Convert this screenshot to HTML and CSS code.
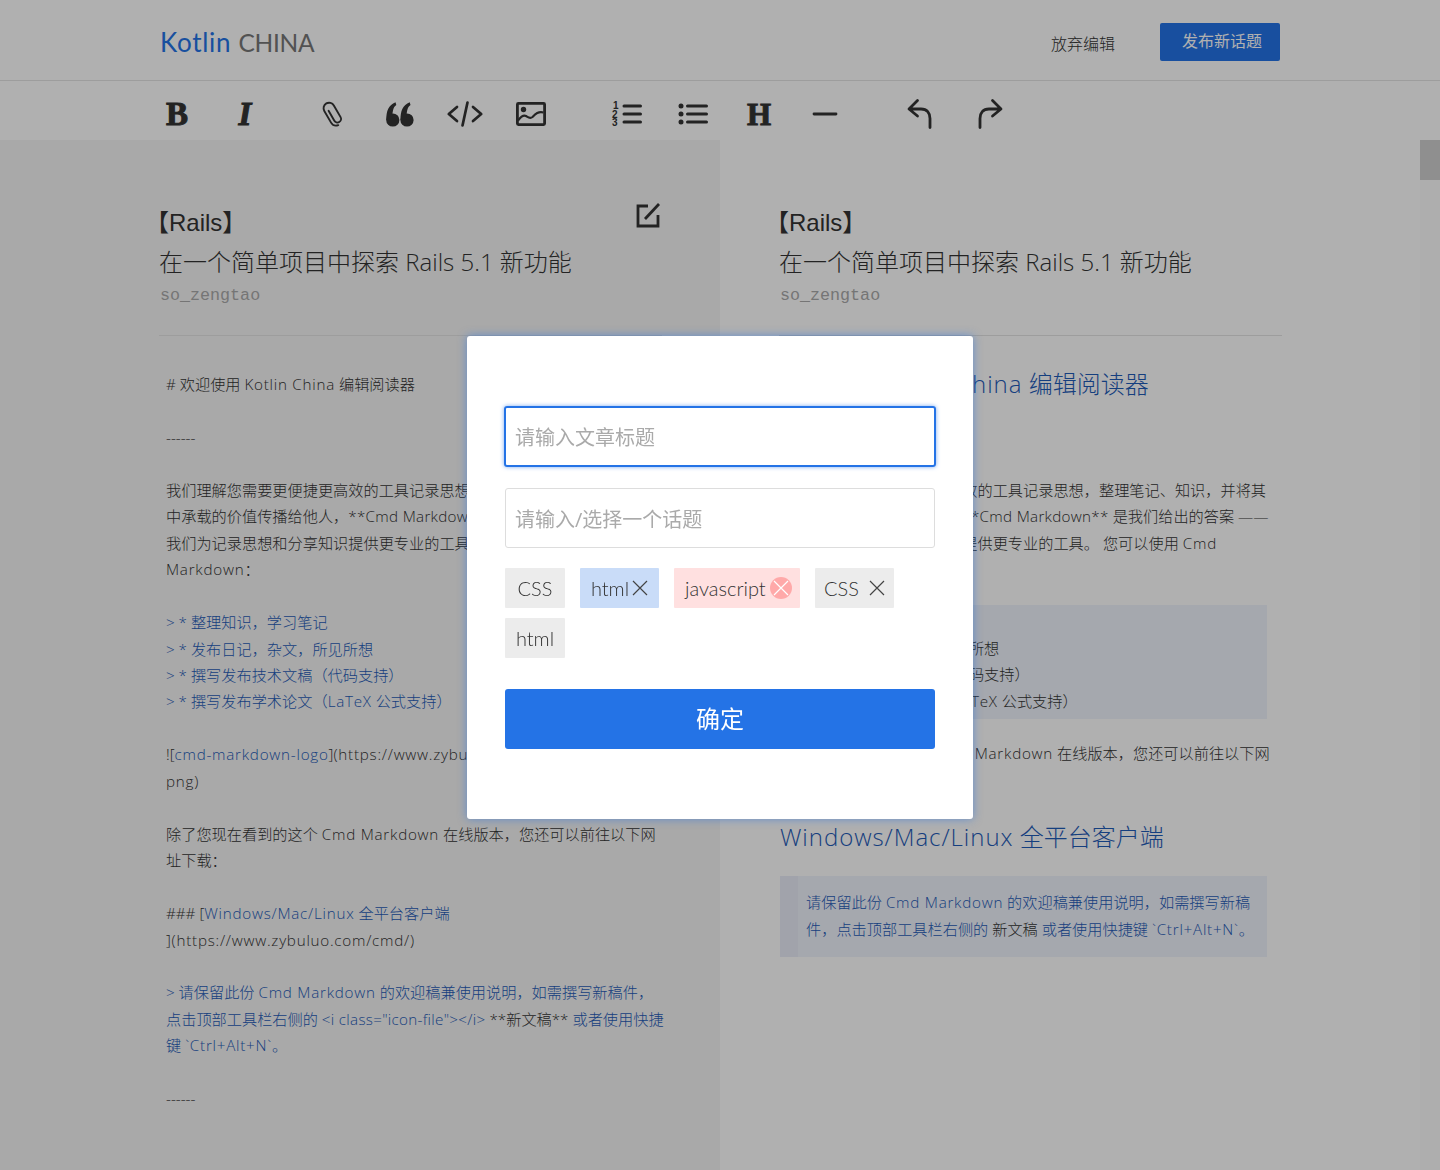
FILE: index.html
```html
<!DOCTYPE html>
<html lang="zh-CN">
<head>
    <meta charset="UTF-8">
    <title>Kotlin CHINA</title>
    <link rel="stylesheet" href="styles.css">
</head>
<body>
    <header class="topbar">
        <div class="logo"><span class="logo-blue">Kotlin</span> <span class="logo-grey">CHINA</span></div>
        <a class="discard">放弃编辑</a>
        <button class="publish">发布新话题</button>
    </header>

    <div class="toolbar">
        <div class="tool glyph">B</div>
        <div class="tool glyph italic tool-gap-a">I</div>
        <div class="tool tool-gap-b">
            <svg width="24" height="28" viewBox="0 0 24 28" fill="none" stroke="#333" stroke-width="1.900" stroke-linecap="round" stroke-linejoin="round"><g transform="rotate(-30 12 14)"><path d="M9.800 9v11.500a3.600 3.600 0 0 0 7.200 0V7a5.500 5.500 0 0 0-11 0v13.500a6 6 0 0 0 5 5.800"/></g></svg>
        </div>
        <div class="tool tool-quote">
            <svg width="28" height="25" viewBox="0 0 28 25" fill="#333"><circle cx="6.800" cy="18" r="6.600"/><circle cx="21" cy="18" r="6.600"/><path d="M.3 18C.3 9 2.500 3 9.500.3l.8 2.700C7 5 6.300 10 6.300 18zM14.500 18c0-9 2.200-15 9.200-17.700l.8 2.700c-3.300 2-4 7-4 15z"/></svg>
        </div>
        <div class="tool">
            <svg width="36" height="26" viewBox="0 0 36 26" fill="none" stroke="#333" stroke-width="2.700" stroke-linecap="round" stroke-linejoin="round"><path d="M10 6L1.800 13l8.200 7M26 6l8.200 7-8.200 7M20.500 1.500L15.500 24.500"/></svg>
        </div>
        <div class="tool">
            <svg width="30" height="24" viewBox="0 0 30 24" fill="none" stroke="#333" stroke-width="2.800"><rect x="1.400" y="1.400" width="27.200" height="21.200" rx="1"/><circle cx="7.500" cy="7.500" r="2.700" fill="#333" stroke="none"/><path d="M2 18.500c3-4 5.500-6 8-4.500s4 3 6.500 1c3-3 6-6 11-4.500" stroke-width="2.200"/></svg>
        </div>
        <div class="tool tool-gap-c">
            <svg width="30" height="26" viewBox="0 0 30 26"><text class="ol-num" x="1" y="8">1</text><text class="ol-num" x="0" y="17">2</text><text class="ol-num" x="0" y="25">3</text><path d="M12 5h16.500M12 13h16.500M12 21h16.500" stroke="#333" stroke-width="3" stroke-linecap="round"/></svg>
        </div>
        <div class="tool">
            <svg width="30" height="26" viewBox="0 0 30 26" fill="#333"><circle cx="3" cy="5" r="2.500"/><circle cx="3" cy="13" r="2.500"/><circle cx="3" cy="21" r="2.500"/><path d="M9.500 5h19M9.500 13h19M9.500 21h19" stroke="#333" stroke-width="3" stroke-linecap="round"/></svg>
        </div>
        <div class="tool glyph glyph-h">H</div>
        <div class="tool">
            <svg width="24" height="4" viewBox="0 0 24 4"><path d="M1 2h22" stroke="#333" stroke-width="2.800" stroke-linecap="round"/></svg>
        </div>
        <div class="tool tool-gap-d">
            <svg width="26" height="30" viewBox="0 0 26 30" fill="none" stroke="#333" stroke-width="2.800" stroke-linecap="round" stroke-linejoin="round"><path d="M10.500 1.500L2 10l8.500 7M2.500 10H14c6 0 9 4 9 9.500V28.500"/></svg>
        </div>
        <div class="tool tool-last">
            <svg width="26" height="30" viewBox="0 0 26 30" fill="none" stroke="#333" stroke-width="2.800" stroke-linecap="round" stroke-linejoin="round"><path d="M15.500 1.500L24 10l-8.500 7M23.500 10H12C6 10 3 14 3 19.500V28.500"/></svg>
        </div>
    </div>

    <main class="workspace">
        <section class="pane pane-edit">
            <div class="post-head">
                <svg class="edit-icon" width="24" height="26" viewBox="0 0 24 26" fill="none" stroke="#333" stroke-width="2.800"><path d="M12 4H2v20h20V13"/><path d="M9 17L23 2"/></svg>
                <div class="post-tag">【<span class="rails">Rails</span>】</div>
                <div class="post-title">在一个简单项目中探索 Rails 5.1 新功能</div>
                <div class="post-author">so_zengtao</div>
            </div>
            <div class="source"># 欢迎使用 <span class="en">Kotlin China</span> 编辑阅读器

------

我们理解您需要更便捷更高效的工具记录思想，整理笔记、知识，并将其
中承载的价值传播给他人，<span class="en-tight">**Cmd Markdown**</span> 是我们给出的答案 ——
我们为记录思想和分享知识提供更专业的工具。 您可以使用 <span class="en">Cmd</span>
<span class="en">Markdown</span>：

<span class="blue">&gt; * 整理知识，学习笔记
&gt; * 发布日记，杂文，所见所想
&gt; * 撰写发布技术文稿（代码支持）
&gt; * 撰写发布学术论文（<span class="en">LaTeX</span> 公式支持）</span>

![<span class="blue en">cmd-markdown-logo</span>]<span class="en">(https://www.zybuluo.com/static/img/logo.</span>
<span class="en">png)</span>

除了您现在看到的这个 <span class="en">Cmd Markdown</span> 在线版本，您还可以前往以下网
址下载：

### [<span class="blue"><span class="en">Windows/Mac/Linux</span> 全平台客户端</span>
<span class="en">](https://www.zybuluo.com/cmd/)</span>

<span class="blue">&gt; 请保留此份 <span class="en">Cmd Markdown</span> 的欢迎稿兼使用说明，如需撰写新稿件，
点击顶部工具栏右侧的 <span class="en-tight">&lt;i class="icon-file"&gt;&lt;/i&gt;</span></span> **新文稿** <span class="blue">或者使用快捷
键 <span class="en">`Ctrl+Alt+N`</span>。</span>

------</div>
        </section>

        <section class="pane pane-preview">
            <div class="post-head">
                <div class="post-tag">【<span class="rails">Rails</span>】</div>
                <div class="post-title">在一个简单项目中探索 Rails 5.1 新功能</div>
                <div class="post-author">so_zengtao</div>
            </div>
            <h1 class="preview-h">欢迎使用 <span class="en">Kotlin China</span> 编辑阅读器</h1>
            <p class="preview-p">我们理解您需要更便捷更高效的工具记录思想，整理笔记、知识，并将其<br>中承载的价值传播给他人，<span class="en-tight">**Cmd Markdown**</span> 是我们给出的答案 ——<br>我们为记录思想和分享知识提供更专业的工具。 您可以使用 <span class="en">Cmd</span><br><span class="en">Markdown</span>：</p>
            <blockquote class="quote quote-list">
                整理知识，学习笔记<br>发布日记，杂文，所见所想<br>撰写发布技术文稿（代码支持）<br>撰写发布学术论文（<span class="en">LaTeX</span> 公式支持）
            </blockquote>
            <p class="preview-p preview-after">除了您现在看到的这个 <span class="en">Cmd Markdown</span> 在线版本，您还可以前往以下网<br>址下载：</p>
            <h3 class="preview-h preview-h3"><span class="en">Windows/Mac/Linux</span> 全平台客户端</h3>
            <blockquote class="quote quote-note">
                请保留此份 <span class="en">Cmd Markdown</span> 的欢迎稿兼使用说明，如需撰写新稿<br>件，点击顶部工具栏右侧的 <span class="dark">新文稿</span> 或者使用快捷键 <span class="en">`Ctrl+Alt+N`</span>。
            </blockquote>
        </section>

        <div class="scrollbar"><div class="scroll-thumb"></div></div>
    </main>

    <div class="mask"></div>

    <div class="modal">
        <div class="field field-active">请输入文章标题</div>
        <div class="field">请输入/选择一个话题</div>
        <div class="tags">
            <span class="tag tag-fixed">CSS</span>
            <span class="tag tag-blue">html
                <svg class="tag-x" width="16" height="16" viewBox="0 0 16 16"><path d="M1 1l14 14M15 1L1 15" stroke="#444" stroke-width="1.200"/></svg>
            </span>
            <span class="tag tag-red">javascript
                <span class="tag-close"><svg width="16" height="16" viewBox="0 0 16 16"><path d="M1 1l14 14M15 1L1 15" stroke="#fff" stroke-width="1.200"/></svg></span>
            </span>
            <span class="tag tag-wide">CSS
                <svg class="tag-x" width="16" height="16" viewBox="0 0 16 16"><path d="M1 1l14 14M15 1L1 15" stroke="#444" stroke-width="1.200"/></svg>
            </span>
            <span class="tag tag-fixed">html</span>
        </div>
        <button class="confirm">确定</button>
    </div>
</body>
</html>
```

FILE: styles.css
```css
body {
    margin: 0;
    height: 1170px;
    overflow: hidden;
    background: #fff;
    color: #333;
    font-family: "Open Sans", "Noto Sans CJK SC", sans-serif;
    font-weight: 300;
}

/* top bar */
.topbar {
    height: 80px;
    border-bottom: 1px solid #e4e4e4;
    padding: 0 160px;
    display: flex;
    align-items: center;
}

.logo {
    flex: 1;
    font-family: Lato, sans-serif;
    font-weight: 400;
    font-size: 26px;
    margin-top: 4px;
    letter-spacing: 0.7px;
}

.logo-blue {
    color: #2473e6;
}

.logo-grey {
    color: #777;
    font-size: 24.5px;
    letter-spacing: -0.3px;
}

.discard {
    font-size: 16px;
    margin-right: 45px;
    margin-top: 6px;
    color: #333;
}

.publish {
    width: 120px;
    height: 38px;
    margin-top: 4px;
    padding: 0 6px 4px 10px;
    border: none;
    border-radius: 2px;
    background: #2473e6;
    color: #fff;
    font-size: 16px;
    font-family: inherit;
}

/* editor tools */
.toolbar {
    height: 59px;
    padding-left: 144px;
    display: flex;
    align-items: center;
}

.tool {
    width: 66px;
    height: 59px;
    display: flex;
    align-items: center;
    justify-content: center;
    flex-shrink: 0;
    margin-top: 5px;
}

.tool svg {
    margin-top: 2px;
    overflow: visible;
}

.tool-quote svg {
    margin-left: 2px;
}

.glyph {
    font-family: "Liberation Serif", serif;
    font-weight: bold;
    font-size: 33px;
    color: #333;
    -webkit-text-stroke: 1px #333;
    padding-top: 3px;
    box-sizing: border-box;
}

.glyph-h {
    font-size: 31px;
}

.italic {
    font-style: italic;
}

.tool-gap-a {
    margin-left: 2px;
}

.tool-gap-b {
    margin-left: 22px;
}

.tool-gap-c {
    margin-left: 30px;
}

.tool-gap-d {
    margin-left: 29px;
}

.tool-last {
    margin-left: 4px;
}

.ol-num {
    font-family: "Liberation Sans", sans-serif;
    font-weight: bold;
    font-size: 10px;
    fill: #333;
}

/* two panes */
.workspace {
    display: flex;
    height: 1030px;
}

.pane {
    box-sizing: border-box;
    height: 1030px;
    overflow: hidden;
}

.pane-edit {
    width: 720px;
    background: #f5f5f5;
    padding: 68px 0 0 160px;
    position: relative;
}

.pane-preview {
    width: 700px;
    padding: 68px 138px 0 60px;
}

.post-head {
    border-bottom: 1px solid #e4e4e4;
    height: 128px;
    margin-left: -1px;
    width: 503px;
}

.edit-icon {
    position: absolute;
    left: 636px;
    top: 62px;
}

.post-tag {
    font-size: 24px;
    font-weight: 400;
    line-height: 30px;
    margin: -1px 0 0 -14px;
}

.rails {
    font-family: "Liberation Sans", sans-serif;
}

.post-title {
    font-size: 24px;
    line-height: 30px;
    margin-top: 9px;
    white-space: nowrap;
}

.post-author {
    font-family: "Liberation Mono", monospace;
    font-size: 16.7px;
    font-weight: 400;
    line-height: 20px;
    color: #aaa;
    margin-top: 9px;
    margin-left: 1px;
}

.source {
    white-space: pre-line;
    font-size: 15.2px;
    line-height: 26.45px;
    margin: 35px 0 0 6px;
    width: 560px;
}

/* latin runs sit wider than the default face */
.en {
    letter-spacing: 0.05em;
}

.en-tight {
    letter-spacing: 0.02em;
}

.blue {
    color: #1f5cb8;
}

.dark {
    color: #333;
}

.preview-h {
    font-size: 24px;
    font-weight: 300;
    line-height: 30px;
    color: #1f5cb8;
    margin: 33px 0 0 0;
    white-space: nowrap;
}

.preview-h .en {
    letter-spacing: 0.04em;
}

.preview-p {
    font-size: 15.2px;
    line-height: 26.4px;
    margin: 0;
    white-space: nowrap;
    width: 502px;
}

.pane-preview h1 + .preview-p {
    margin-top: 78px;
}

.quote {
    margin: 0;
    box-sizing: border-box;
    width: 487px;
    background: #eff3fc;
    border-left: 18px solid #e9edf8;
    font-size: 15.2px;
    line-height: 26.4px;
    padding: 8px 8px 0 8px;
    white-space: nowrap;
}

.quote-list {
    height: 114px;
    margin-top: 22px;
    padding: 4px 0 0 19px;
}

.preview-after {
    margin-top: 21px;
}

.preview-h3 {
    margin-top: 30px;
}

.quote-note {
    height: 81px;
    margin-top: 24px;
    padding-top: 13px;
    color: #1f5cb8;
}

.scrollbar {
    width: 20px;
    background: #fdfdfd;
}

.scroll-thumb {
    height: 40px;
    background: #d0d0d0;
}

/* dialog */
.mask {
    position: fixed;
    left: 0;
    top: 0;
    right: 0;
    bottom: 0;
    background: rgba(0, 0, 0, 0.31);
}

.modal {
    position: absolute;
    left: 467px;
    top: 336px;
    width: 506px;
    height: 483px;
    box-sizing: border-box;
    padding: 70px 38px 0;
    background: #fff;
    border-radius: 3px;
    box-shadow: 0 0 10px rgba(36, 115, 230, 0.55);
}

.field {
    height: 60px;
    box-sizing: border-box;
    border: 1px solid #ddd;
    border-radius: 3px;
    padding-left: 9px;
    margin-bottom: 20px;
    font-size: 20px;
    font-weight: 400;
    line-height: 61px;
    color: #aaa;
}

.field-active {
    border: 2px solid #2473e6;
    box-shadow: 0 0 4px rgba(36, 115, 230, 0.6);
    line-height: 59px;
    margin: 0 -1px 21px;
    height: 61px;
}

.tags {
    display: flex;
    flex-wrap: wrap;
    gap: 10px 15px;
    height: 90px;
    width: 430px;
}

.tag {
    height: 40px;
    box-sizing: border-box;
    display: flex;
    align-items: center;
    justify-content: center;
    padding-bottom: 1px;
    background: #ececec;
    border-radius: 1px;
    font-family: Lato, "Noto Sans CJK SC", sans-serif;
    font-size: 20px;
    color: #333;
}

.tag-fixed {
    width: 60px;
}

.tag-blue {
    width: 79px;
    background: #c9dcf8;
    gap: 3px;
}

.tag-red {
    width: 126px;
    background: #ffe0e0;
    justify-content: flex-start;
    padding-left: 11px;
    gap: 4px;
}

.tag-close {
    width: 22px;
    height: 22px;
    border-radius: 50%;
    background: #ffa9a9;
    display: flex;
    align-items: center;
    justify-content: center;
}

.tag-wide {
    width: 79px;
    gap: 10px;
}

.confirm {
    display: block;
    width: 430px;
    height: 60px;
    margin-top: 31px;
    padding-bottom: 4px;
    border: none;
    border-radius: 3px;
    background: #2473e6;
    color: #fff;
    font-size: 24px;
    font-weight: 400;
    font-family: inherit;
}
```
